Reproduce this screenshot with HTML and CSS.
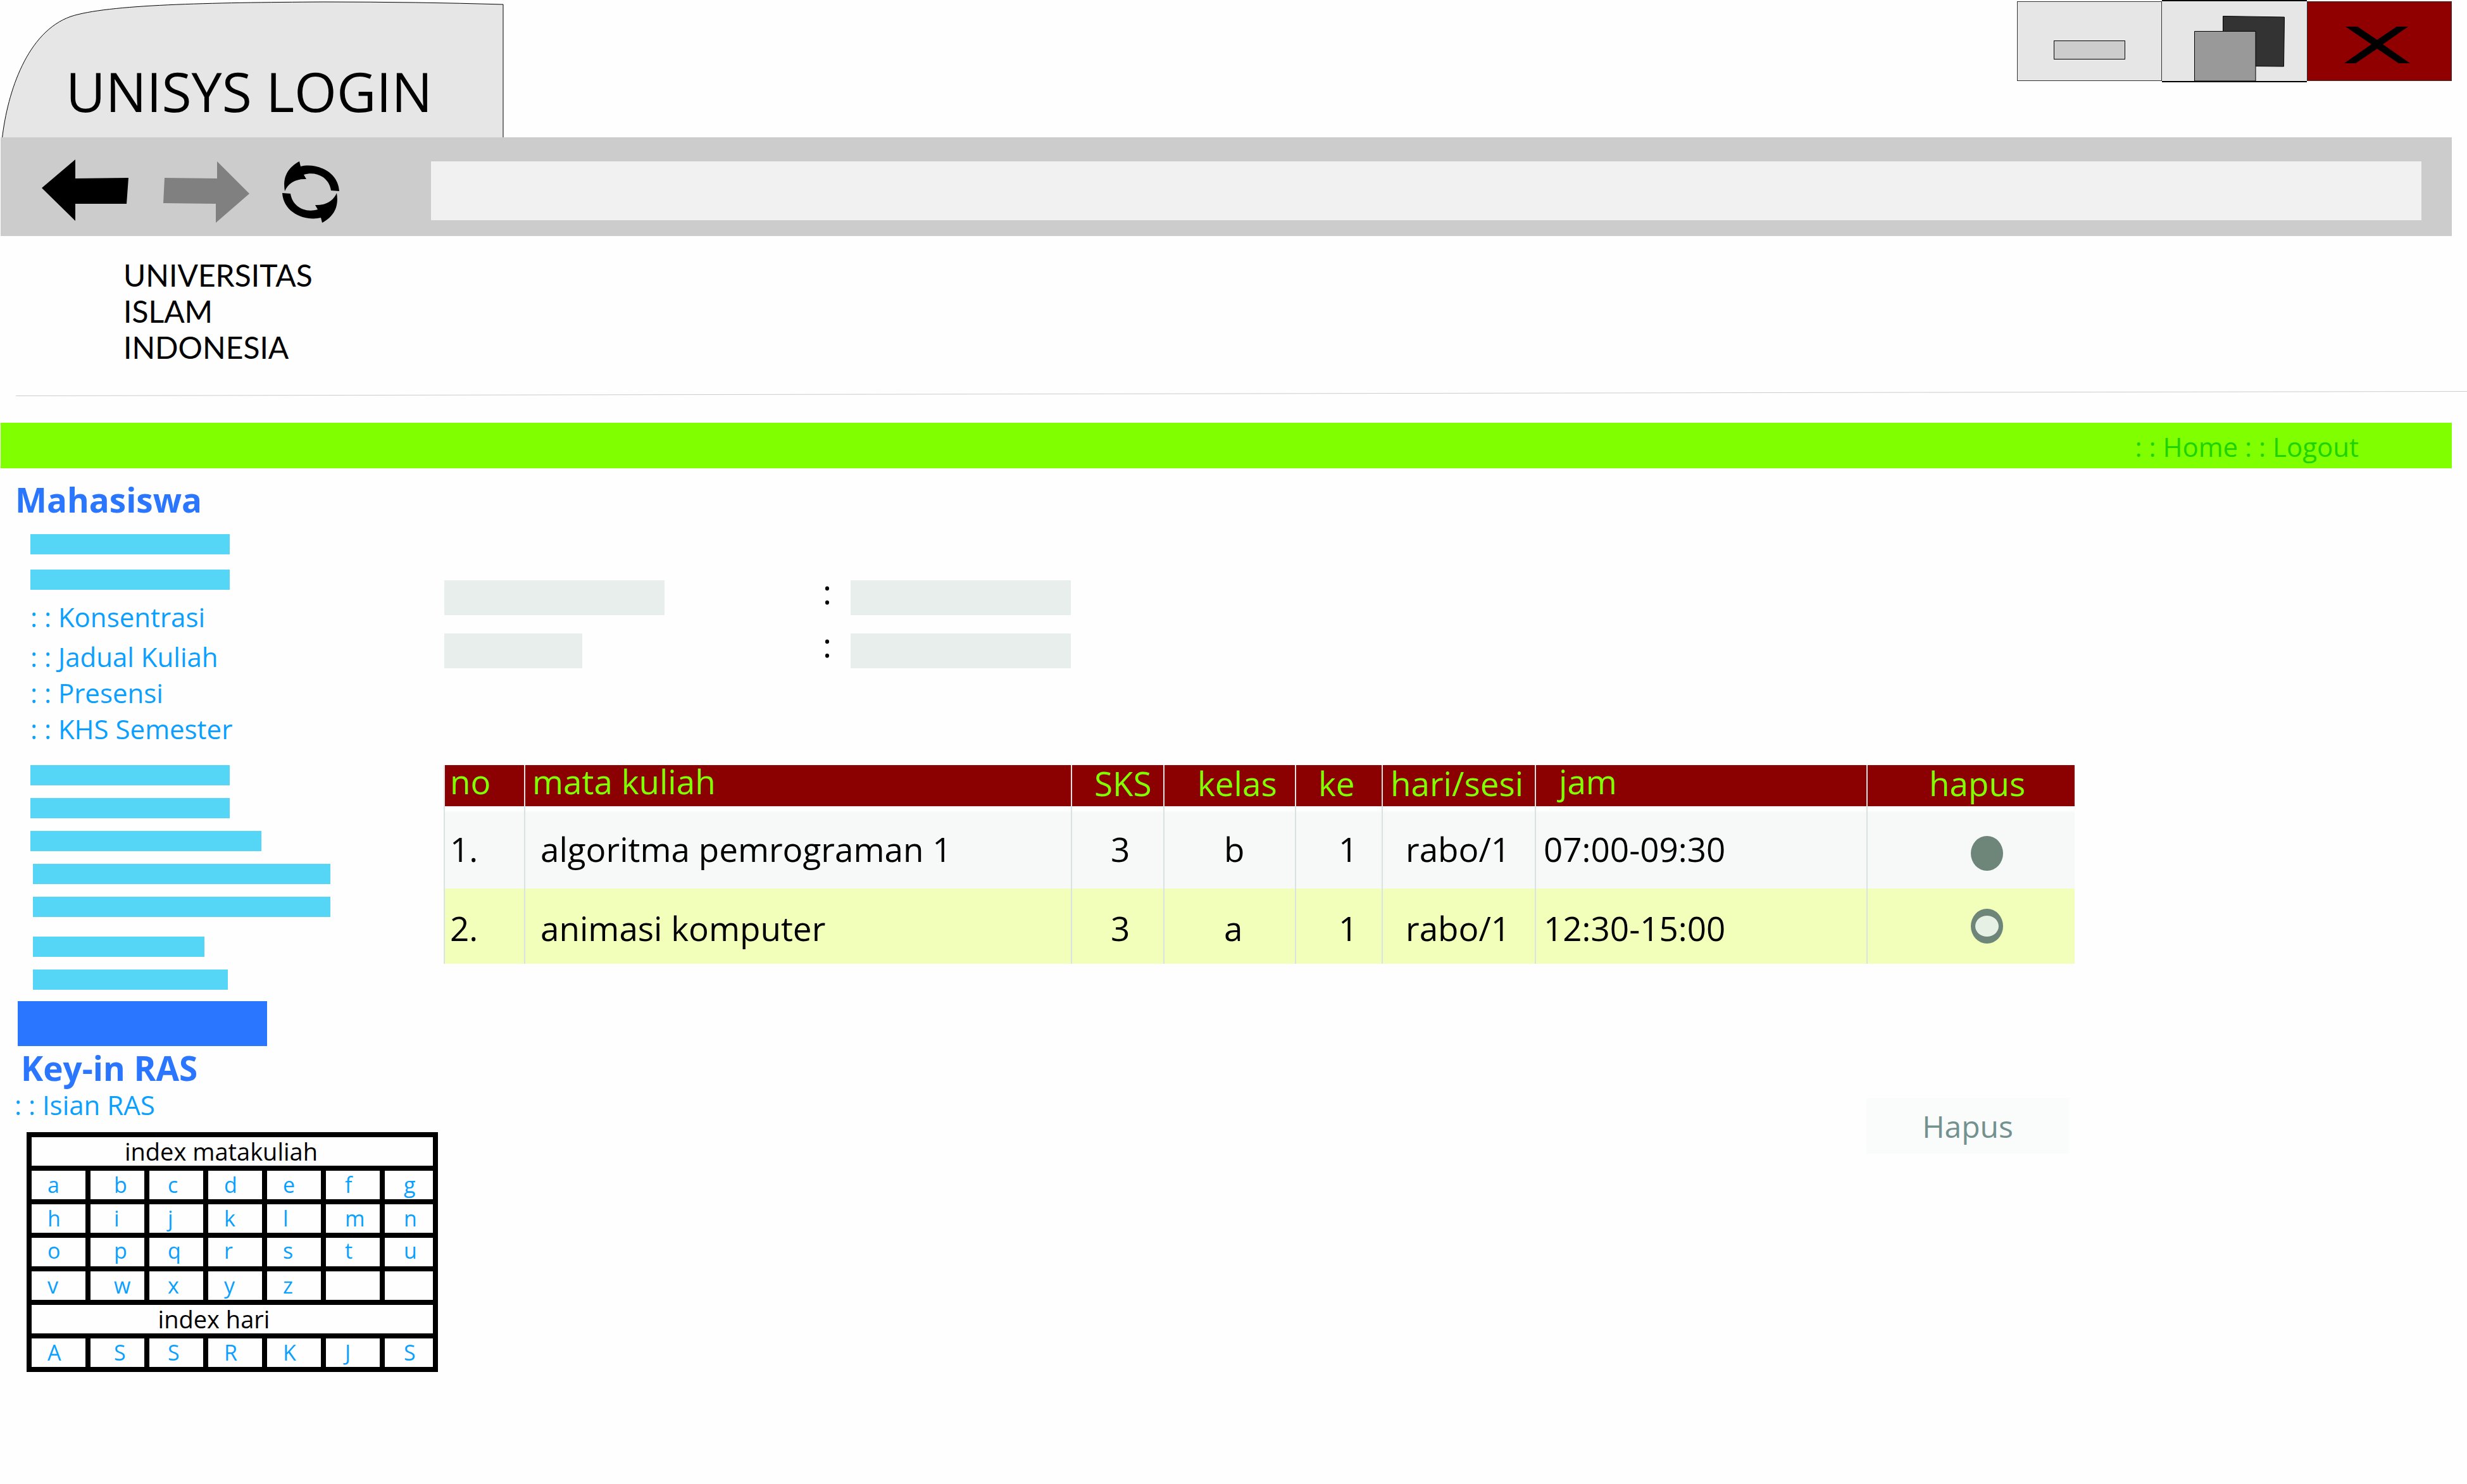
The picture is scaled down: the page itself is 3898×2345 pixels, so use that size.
FILE: index.html
```html
<!DOCTYPE html>
<html lang="id">
<head>
<meta charset="utf-8">
<title>UNISYS LOGIN</title>
<link rel="stylesheet" href="styles.css">
</head>
<body>
<header class="window">
  <div class="titlebar">
    <div class="tab">
      <svg class="tab-shape" viewBox="0 0 798 217" aria-hidden="true"><path d="M3.5 218C12 145 43 50 112 26C170 7 330 4 512 3Q660 3 795 7V218" fill="#e6e6e6" stroke="#000" stroke-width="1"/></svg>
      <span class="tab-title">UNISYS LOGIN</span>
    </div>
    <div class="window-buttons">
      <button class="win-btn" type="button" aria-label="Minimize">
        <svg viewBox="0 0 229 126"><rect x="58.5" y="62.5" width="112" height="29" fill="#ccc" stroke="#000"/></svg>
      </button>
      <button class="win-btn win-restore" type="button" aria-label="Restore">
        <svg viewBox="0 0 229 126"><path d="M96.500 23.500L193.500 25L192.500 103L96.500 102Z" fill="#333" stroke="#000"/><path d="M51.500 47.500H148V126H51.500Z" fill="#999" stroke="#000"/></svg>
      </button>
      <button class="win-btn win-close" type="button" aria-label="Close">
        <svg viewBox="0 0 229 126"><path d="M61 40H80L111 61L142 40H160L120 68L163 98H145L111 75L77 98H59L102 68Z" fill="#000"/></svg>
      </button>
    </div>
  </div>
  <div class="toolbar">
    <button class="tool back" type="button" aria-label="Back">
      <svg viewBox="0 0 140 104"><path d="M1 47L54 2V32L138 31L135 72H54V99Z" fill="#000"/></svg>
    </button>
    <button class="tool forward" type="button" aria-label="Forward">
      <svg viewBox="0 0 140 104"><path d="M3 31L86 32V5L137 56L84 102V72L1 71Z" fill="#808080"/></svg>
    </button>
    <button class="tool reload" type="button" aria-label="Reload">
      <svg viewBox="0 0 100 104"><g fill="#000"><path d="M30 5L32 13C56 7 91 20 93 52L80 51C77 31 58 20 37 26L41 33C24 32 12 40 7 52C4 34 8 17 30 5Z"/><path d="M30 5L32 13C56 7 91 20 93 52L80 51C77 31 58 20 37 26L41 33C24 32 12 40 7 52C4 34 8 17 30 5Z" transform="rotate(180 48 53.500)"/></g></svg>
    </button>
    <input class="address" type="text" aria-label="Address">
  </div>
</header>

<div class="brand">UNIVERSITAS<br>ISLAM<br>INDONESIA</div>
<svg class="rule" viewBox="0 0 100 8" preserveAspectRatio="none" aria-hidden="true"><path d="M0 7.500L100 .500" stroke="#ccc" vector-effect="non-scaling-stroke"/></svg>

<nav class="topnav">: : <a href="#home">Home</a> : : <a href="#logout">Logout</a></nav>

<div class="page">
  <aside class="sidebar">
    <h2 class="heading">Mahasiswa</h2>
    <div class="bars bars-top"><span class="bar"></span><span class="bar"></span></div>
    <ul class="menu">
      <li><a href="#konsentrasi">: : Konsentrasi</a></li>
      <li><a href="#jadual">: : Jadual Kuliah</a></li>
      <li><a href="#presensi">: : Presensi</a></li>
      <li><a href="#khs">: : KHS Semester</a></li>
    </ul>
    <div class="bars bars-middle">
      <span class="bar"></span><span class="bar"></span><span class="bar bar-medium"></span><span class="bar bar-wide"></span><span class="bar bar-wide"></span>
    </div>
    <div class="bars bars-bottom"><span class="bar bar-short"></span><span class="bar bar-last"></span></div>
    <div class="banner"></div>
    <h2 class="heading heading-ras">Key-in RAS</h2>
    <a class="ras-link" href="#isian">: : Isian RAS</a>
    <table class="index">
      <colgroup><col span="6" class="index-col"><col></colgroup>
      <tbody>
        <tr><th class="index-title" colspan="7">index matakuliah</th></tr>
        <tr><td><a href="#a">a</a></td><td><a href="#b">b</a></td><td><a href="#c">c</a></td><td><a href="#d">d</a></td><td><a href="#e">e</a></td><td><a href="#f">f</a></td><td><a href="#g">g</a></td></tr>
        <tr><td><a href="#h">h</a></td><td><a href="#i">i</a></td><td><a href="#j">j</a></td><td><a href="#k">k</a></td><td><a href="#l">l</a></td><td><a href="#m">m</a></td><td><a href="#n">n</a></td></tr>
        <tr class="raised"><td><a href="#o">o</a></td><td><a href="#p">p</a></td><td><a href="#q">q</a></td><td><a href="#r">r</a></td><td><a href="#s">s</a></td><td><a href="#t">t</a></td><td><a href="#u">u</a></td></tr>
        <tr><td><a href="#v">v</a></td><td><a href="#w">w</a></td><td><a href="#x">x</a></td><td><a href="#y">y</a></td><td><a href="#z">z</a></td><td></td><td></td></tr>
        <tr><th class="index-title index-days" colspan="7">index hari</th></tr>
        <tr><td><a href="#ahad">A</a></td><td><a href="#senin">S</a></td><td><a href="#selasa">S</a></td><td><a href="#rabu">R</a></td><td><a href="#kamis">K</a></td><td><a href="#jumat">J</a></td><td><a href="#sabtu">S</a></td></tr>
      </tbody>
    </table>
  </aside>

  <main class="content">
    <div class="info">
      <span class="field"></span><span class="colon">:</span><span class="field"></span>
      <span class="field field-short"></span><span class="colon">:</span><span class="field"></span>
    </div>
    <form class="courses">
      <table class="course-table">
        <colgroup><col class="w-no"><col><col class="w-sks"><col class="w-kelas"><col class="w-ke"><col class="w-hari"><col class="w-jam"><col class="w-hapus"></colgroup>
        <thead>
          <tr><th class="no high">no</th><th class="mk high">mata kuliah</th><th class="sks">SKS</th><th class="kelas">kelas</th><th class="ke">ke</th><th class="hari">hari/sesi</th><th class="jam high">jam</th><th class="hapus">hapus</th></tr>
        </thead>
        <tbody>
          <tr><td class="no">1.</td><td class="mk">algoritma pemrograman 1</td><td class="sks">3</td><td class="kelas">b</td><td class="ke">1</td><td class="hari">rabo/1</td><td class="jam">07:00-09:30</td><td class="hapus"><input class="pick" type="radio" name="hapus" aria-label="algoritma pemrograman 1" checked></td></tr>
          <tr><td class="no">2.</td><td class="mk">animasi komputer</td><td class="sks">3</td><td class="kelas">a</td><td class="ke">1</td><td class="hari">rabo/1</td><td class="jam">12:30-15:00</td><td class="hapus"><input class="pick" type="radio" name="hapus" aria-label="animasi komputer"></td></tr>
        </tbody>
      </table>
      <button class="delete" type="button">Hapus</button>
    </form>
  </main>
</div>
</body>
</html>
```
FILE: styles.css
```css
* { box-sizing: border-box; }

body {
  margin: 0;
  background: #fefefe;
  color: #000;
  font-family: "Open Sans", "Noto Sans", sans-serif;
  font-size: 42px;
}

a { color: inherit; text-decoration: none; }
button { padding: 0; border: 0; background: none; font: inherit; }
svg { display: block; }

/* Browser window chrome */
.window { padding: 0 24px 0 1px; }
.titlebar { display: flex; justify-content: space-between; align-items: flex-start; }
.tab { position: relative; width: 798px; height: 217px; margin-left: -1px; padding: 94px 0 0 104px; }
.tab-shape { position: absolute; left: 0; top: 0; width: 798px; height: 217px; }
.tab-title { position: relative; font-size: 86px; line-height: 100px; white-space: nowrap; }

.window-buttons { display: flex; align-items: center; height: 130px; }
.win-btn { width: 229px; height: 126px; background: #e6e6e6; outline: 1px solid #333; outline-offset: -1px; }
.win-btn svg { width: 229px; height: 126px; }
.win-restore { height: 130px; border: solid #000; border-width: 2px 0; outline: 0; }
.win-close { background: #900000; }

.toolbar { display: flex; align-items: center; height: 156px; padding: 13px 48px 0 64px; background: #ccc; }
.tool { flex: none; height: 104px; }
.tool svg { height: 104px; }
.back, .forward { width: 140px; }
.forward { margin-left: 52px; }
.reload { width: 100px; margin-left: 46px; }
.address { flex: 1; min-width: 0; height: 93px; margin: 0 0 0 138px; padding: 0 16px; border: 0; background: #f1f1f1; font: inherit; }

/* Site header */
.brand { padding: 33px 0 0 195px; font-family: Lato, sans-serif; font-size: 48px; line-height: 57px; }
.rule { width: calc(100% - 25px); height: 8px; margin: 41px 0 42px 25px; }
.topnav {
  height: 72px;
  margin: 0 24px 0 1px;
  padding: 6px 147px 0 0;
  background: #80ff00;
  color: #1fd300;
  line-height: 64px;
  text-align: right;
}

.page { display: flex; align-items: flex-start; }

/* Sidebar */
.sidebar { flex: none; width: 701px; padding-top: 21px; color: #0aa0ff; }
.heading { margin: 0 0 0 24px; color: #2b76ff; font-size: 53px; line-height: 58px; }
.bars { display: flex; flex-direction: column; margin-left: 48px; }
.bars-top { gap: 24px; margin-top: 25px; }
.bars-middle { gap: 20px; margin-top: 29px; }
.bars-bottom { gap: 20px; margin: 31px 0 0 52px; }
.bar { width: 315px; height: 32px; background: #56d6f7; }
.bar-short { width: 271px; }
.bar-medium { width: 365px; }
.bar-wide { width: 470px; margin-left: 4px; }
.bar-last { width: 308px; }
.menu { margin: 14px 0 0 48px; padding: 0; list-style: none; line-height: 57px; }
.menu li:first-child { margin-bottom: 6px; }
.banner { width: 394px; height: 71px; margin: 18px 0 6px 28px; background: #2b76ff; }
.heading-ras { margin-left: 33px; }
.ras-link { display: block; margin-left: 23px; line-height: 57px; }

.index { width: 650px; margin: 15px 0 0 42px; border-collapse: collapse; table-layout: fixed; font-size: 34px; line-height: 45px; }
.index-col { width: 93px; }
.index th, .index td { height: 53px; padding: 0; border: 8px solid #000; }
.index td { padding-left: 25px; }
.index td:nth-child(2) { padding-left: 37px; }
.index td:nth-child(3) { padding-left: 29px; }
.index td:nth-child(n+6) { padding-left: 30px; }
.index .raised td { padding-bottom: 4px; line-height: 41px; }
.index .index-title { padding-right: 35px; color: #000; font-size: 38px; font-weight: 400; line-height: 43px; }
.index .index-days { padding-right: 58px; }

/* Main column */
.content { flex: 1; min-width: 0; padding: 177px 620px 0 0; }
.info { display: grid; grid-template-columns: 598px 44px 348px; grid-auto-rows: 55px; row-gap: 29px; padding-left: 1px; }
.field { width: 348px; background: #e7eeeb; }
.field-short { width: 218px; }
.colon { font-size: 53px; line-height: 35px; }

.course-table { width: 100%; margin-top: 153px; border-collapse: separate; border-spacing: 0; table-layout: fixed; font-size: 53px; line-height: 52px; }
.w-no { width: 127px; }
.w-sks { width: 146px; }
.w-kelas { width: 208px; }
.w-ke { width: 137px; }
.w-hari { width: 242px; }
.w-jam { width: 524px; }
.w-hapus { width: 329px; }
.course-table th, .course-table td { border-left: 2px solid #d9e3e2; text-align: left; white-space: nowrap; }
.course-table th { height: 65px; padding: 0 0 8px; background: #8b0000; color: #80ff00; font-weight: 400; }
.course-table th.high { padding-bottom: 13px; }
.course-table td { height: 119px; padding: 6px 0 0; }
.course-table tbody tr:first-child td { height: 130px; background: linear-gradient(#fefefe 6px, #f7f9f8 10px); }
.course-table tbody tr:last-child td { background: #f1ffbb; }
.course-table .no { padding-left: 8px; }
.course-table th.mk { padding-left: 11px; }
.course-table td.mk { padding-left: 24px; }
.course-table th.sks { padding-left: 35px; }
.course-table td.sks { padding-left: 61px; }
.course-table th.kelas { padding-left: 52px; }
.course-table td.kelas { padding-left: 94px; }
.course-table th.ke { padding-left: 35px; }
.course-table td.ke { padding-left: 67px; }
.course-table th.hari { padding-left: 12px; }
.course-table td.hari { padding-left: 36px; }
.course-table th.jam { padding-left: 36px; }
.course-table td.jam { padding-left: 12px; }
.course-table th.hapus { padding-left: 97px; }
.course-table td.hapus { padding: 0 0 0 163px; }
.course-table tbody tr:first-child td.hapus { padding-top: 18px; }

.pick { appearance: none; display: block; width: 51px; height: 55px; margin: 0; border: solid #6e8579; border-width: 11px 7px; border-radius: 50%; background: #e7f0e4; }
.pick:checked { background: #6e8579; }

.delete { display: block; width: 320px; height: 88px; margin: 212px 9px 0 auto; background: #fafcfb; color: #72918f; font-size: 48px; }
```
